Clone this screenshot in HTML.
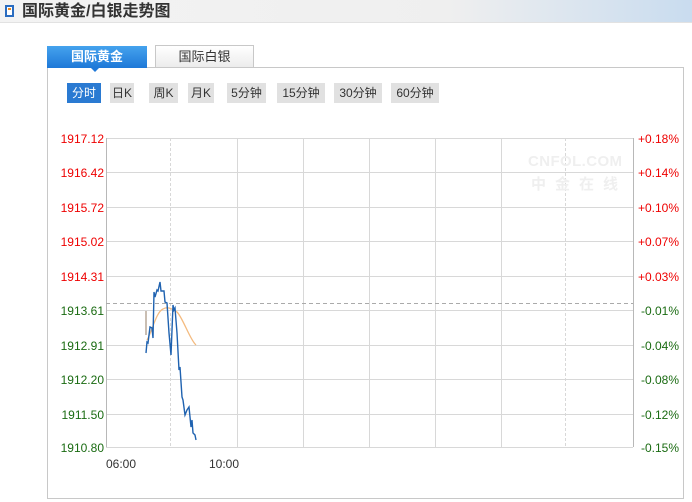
<!DOCTYPE html>
<html><head><meta charset="utf-8"><style>
*{margin:0;padding:0;box-sizing:border-box}
body{width:692px;height:502px;background:#fff;position:relative;overflow:hidden;font-family:"Liberation Sans","Noto Sans CJK SC",sans-serif}
.bar{position:absolute;left:0;top:0;width:692px;height:23px;background:linear-gradient(to right,#f3f3f3 0%,#efefef 65%,#c9dcef 100%);border-bottom:1px solid #e2e2e2}
.bar .ic{position:absolute;left:5px;top:5px;width:9px;height:12px;border:2px solid #2a6cc0;background:#fff}
.bar .ic:after{content:"";position:absolute;left:1px;top:1px;width:3px;height:2px;background:#f08a1c}
.bar span{position:absolute;left:22px;top:1px;font-size:16px;font-weight:bold;color:#333;line-height:22px}
.panel{position:absolute;left:47px;top:67px;width:637px;height:432px;border:1px solid #c8c8c8}
.tab{position:absolute;top:46px;height:22px;text-align:center;font-size:13px;line-height:22px}
.t1{left:47px;width:100px;background:linear-gradient(#45a3ee,#1e78d8);color:#fff;font-weight:bold;z-index:2}
.t1:after{content:"";position:absolute;left:44px;bottom:-4px;border-left:4px solid transparent;border-right:4px solid transparent;border-top:4px solid #1e78d8}
.t2{left:155px;width:99px;background:linear-gradient(#fff,#ececec);border:1px solid #c8c8c8;border-bottom:none;color:#333;top:45px}
.btn{position:absolute;top:83px;height:20px;background:#e1e1e1;color:#333;font-size:12px;line-height:20px;text-align:center}
.btn.on{background:#2a7ad2;color:#fff}
.lab{position:absolute;font-size:12px;line-height:12px}
.l{left:50px;width:54px;text-align:right}
.r{left:630px;width:49px;text-align:right}
.red{color:#e00}.grn{color:#1a6b12}
</style></head><body>
<div class="bar"><div class="ic"></div><span>国际黄金/白银走势图</span></div>
<div class="panel"></div>
<div class="tab t1">国际黄金</div>
<div class="tab t2">国际白银</div>
<div class="btn on" style="left:67px;width:34px">分时</div>
<div class="btn" style="left:110px;width:24px">日K</div>
<div class="btn" style="left:149px;width:29px">周K</div>
<div class="btn" style="left:188px;width:26px">月K</div>
<div class="btn" style="left:227px;width:39px">5分钟</div>
<div class="btn" style="left:277px;width:48px">15分钟</div>
<div class="btn" style="left:334px;width:48px">30分钟</div>
<div class="btn" style="left:391px;width:48px">60分钟</div>
<svg style="position:absolute;left:0;top:0" width="692" height="502">
<g stroke="#d8d8d8" stroke-width="1" fill="none">
<path d="M106 138.5H633M106 172.5H633M106 207.5H633M106 241.5H633M106 276.5H633M106 310.5H633M106 345.5H633M106 379.5H633M106 414.5H633M106 447.5H633"/>
<path d="M237.5 138V447M303.5 138V447M369.5 138V447M435.5 138V447M501.5 138V447"/>
<path d="M170.5 138V447M565.5 138V447" stroke-dasharray="3,2"/>
</g>
<path d="M106.5 138V447M633.5 138V447" stroke="#b8b8b8"/>
<path d="M106 303.5H633" stroke="#aaa" stroke-dasharray="4,3"/>
<text x="528" y="166" font-family="Liberation Sans" font-size="15" font-weight="bold" fill="#efefef" textLength="94">CNFOL.COM</text>
<text x="531" y="189" font-family="Noto Sans CJK SC" font-size="15" font-weight="bold" fill="#efefef" letter-spacing="9">中金在线</text>
<path d="M146 311V335" stroke="#b8a898" stroke-width="1.5"/>
<path d="M147 340C152 332 156 312 163 309C168 306 172 309 177 312C183 318 190 340 196 345" stroke="#f4bb80" stroke-width="1.3" fill="none"/>
<path d="M146 353L147 342L148 343L150 327L152 328L153 338L154 292L155 297L157 290L158 291L160 282L161 291L164 291L165 302L167 303L169 333L171 355L173 305L174 310L175 308L177 333L179 370L180 367L182 397L183 400L185 415L187 410L189 407L191 427L192 420L193 433L195 435L196 440" stroke="#1f62b0" stroke-width="1.4" fill="none"/>
<text x="106" y="468" font-family="Liberation Sans" font-size="12" fill="#333">06:00</text>
<text x="209" y="468" font-family="Liberation Sans" font-size="12" fill="#333">10:00</text>
</svg>
<div class="lab l red" style="top:133px">1917.12</div>
<div class="lab l red" style="top:167px">1916.42</div>
<div class="lab l red" style="top:202px">1915.72</div>
<div class="lab l red" style="top:236px">1915.02</div>
<div class="lab l red" style="top:271px">1914.31</div>
<div class="lab l grn" style="top:305px">1913.61</div>
<div class="lab l grn" style="top:340px">1912.91</div>
<div class="lab l grn" style="top:374px">1912.20</div>
<div class="lab l grn" style="top:409px">1911.50</div>
<div class="lab l grn" style="top:442px">1910.80</div>
<div class="lab r red" style="top:133px">+0.18%</div>
<div class="lab r red" style="top:167px">+0.14%</div>
<div class="lab r red" style="top:202px">+0.10%</div>
<div class="lab r red" style="top:236px">+0.07%</div>
<div class="lab r red" style="top:271px">+0.03%</div>
<div class="lab r grn" style="top:305px">-0.01%</div>
<div class="lab r grn" style="top:340px">-0.04%</div>
<div class="lab r grn" style="top:374px">-0.08%</div>
<div class="lab r grn" style="top:409px">-0.12%</div>
<div class="lab r grn" style="top:442px">-0.15%</div>
</body></html>
